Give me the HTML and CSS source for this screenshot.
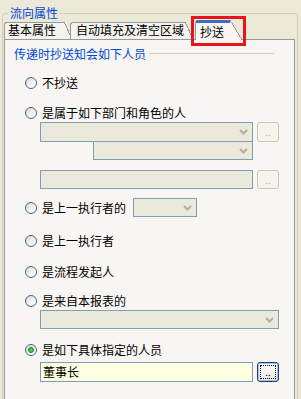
FILE: index.html
```html
<!DOCTYPE html>
<html lang="zh-cn">
<head>
    <meta charset="utf-8">
    <title>流向属性</title>
    <link rel="stylesheet" href="styles.css">
</head>
<body>
    <fieldset class="group">
        <legend class="group-title">流向属性</legend>

        <ul class="tabs">
            <li class="tab"><span>基本属性</span></li>
            <li class="tab tab-2"><span>自动填充及清空区域</span></li>
            <li class="tab tab-on"><span>抄送</span></li>
        </ul>

        <div class="panel">
            <div class="sub-title"><span>传递时抄送知会如下人员</span><i class="rule"></i></div>

            <label class="opt sp12"><input type="radio" name="cc" class="radio">不抄送</label>

            <label class="opt sp11"><input type="radio" name="cc" class="radio">是属于如下部门和角色的人</label>
            <div class="field tall">
                <div class="combo w-long"><svg width="9" height="6" viewBox="0 0 9 6"><polyline points="1,1 4.5,4.5 8,1" fill="none" stroke="#B0AEA1" stroke-width="2"/></svg></div>
                <div class="btn">..</div>
            </div>
            <div class="field up1">
                <div class="combo w-mid"><svg width="9" height="6" viewBox="0 0 9 6"><polyline points="1,1 4.5,4.5 8,1" fill="none" stroke="#B0AEA1" stroke-width="2"/></svg></div>
            </div>
            <div class="field sp10">
                <div class="text-box w-long"></div>
                <div class="btn">..</div>
            </div>

            <div class="opt sp9">
                <label class="opt-in"><input type="radio" name="cc" class="radio">是上一执行者的</label>
                <div class="combo w-short"><svg width="9" height="6" viewBox="0 0 9 6"><polyline points="1,1 4.5,4.5 8,1" fill="none" stroke="#B0AEA1" stroke-width="2"/></svg></div>
            </div>

            <label class="opt sp14"><input type="radio" name="cc" class="radio">是上一执行者</label>

            <label class="opt sp12"><input type="radio" name="cc" class="radio">是流程发起人</label>

            <label class="opt sp10"><input type="radio" name="cc" class="radio">是来自本报表的</label>
            <div class="field">
                <div class="combo w-full"><svg width="9" height="6" viewBox="0 0 9 6"><polyline points="1,1 4.5,4.5 8,1" fill="none" stroke="#B0AEA1" stroke-width="2"/></svg></div>
            </div>

            <label class="opt sp11"><input type="radio" name="cc" class="radio" checked>是如下具体指定的人员</label>
            <div class="field tall sp3">
                <div class="text-box on w-long">董事长</div>
                <div class="btn btn-on"><span>..</span></div>
            </div>
        </div>
    </fieldset>

    <div class="mark"></div>
</body>
</html>
```

FILE: styles.css
```css
body {
    margin: 0;
    position: relative;
    background: #ECE9D8;
    color: #000;
    font: 12px/14px "Noto Sans CJK SC", "Noto Sans", sans-serif;
}

/* 外框 流向属性 (下缘超出画面) */
fieldset.group {
    margin: 6px 3px 0 2px;
    padding: 0 2px 0 1px;
    border: 1px solid #D0D0BF;
    border-bottom: none;
    border-radius: 4px 4px 0 0;
    min-width: 0;
}
legend.group-title {
    margin-left: 4px;
    padding: 0 2px;
    color: #0046D5;
    line-height: 14px;
}

/* 分页标签 */
ul.tabs {
    list-style: none;
    margin: 0;
    padding: 0;
    height: 19px;
    display: flex;
    align-items: flex-end;
}
.tab {
    display: flex;
    height: 17px;
}
.tab span {
    border-top: 1px solid #919B9C;
    border-left: 1px solid #919B9C;
    border-top-left-radius: 3px;
    background: #F4F3EE;
    padding: 0 8px 2px 3px;
    line-height: 14px;
    white-space: nowrap;
}
.tab::after {
    content: "";
    width: 8px;
    background: linear-gradient(to top right, #F4F3EE calc(50% - 0.5px), #919B9C calc(50% - 0.5px), #919B9C calc(50% + 0.5px), transparent calc(50% + 0.5px));
}
.tab-2 {
    margin-left: -2px;
}
.tab-2 span {
    padding: 0 1px 2px 5px;
}
.tab-on {
    height: 20px;
    margin: 0 0 -1px 2px;
    position: relative;
    z-index: 1;
}
.tab-on span {
    border-top: 3px solid #3D6FB8;
    border-top-left-radius: 3px;
    background: #F7F6F3;
    padding: 2px 6px 1px 4px;
}
.tab-on::after {
    width: 12px;
    background: linear-gradient(to top right, #F7F6F3 calc(50% - 0.5px), #919B9C calc(50% - 0.5px), #919B9C calc(50% + 0.5px), transparent calc(50% + 0.5px));
}

/* 分页内容 */
.panel {
    border: 1px solid #919B9C;
    border-bottom: none;
    background: #F7F6F3;
    height: 359px;
    padding-left: 9px;
}
.sub-title {
    display: flex;
    align-items: center;
    height: 14px;
    margin-top: 7px;
    color: #0046D5;
    white-space: nowrap;
}
.sub-title .rule {
    flex: 1;
    height: 1px;
    margin: -1px 20px 0 3px;
    background: #D0D0BF;
}

.opt, .opt-in {
    display: flex;
    align-items: center;
    height: 19px;
    gap: 5px;
    white-space: nowrap;
}
.opt {
    margin-left: 11px;
}
.opt .opt-in {
    margin-right: 2px;
}
.radio {
    appearance: none;
    flex: none;
    margin: 0;
    width: 12px;
    height: 12px;
    border: 1px solid #3A6690;
    border-radius: 50%;
    background: linear-gradient(135deg, #D8D8D0, #FFFFFF 80%);
}
.radio:checked {
    background: radial-gradient(circle, #7EE07E 0, #2DAA2D 2px, #1E931E 2.6px, transparent 3.2px), linear-gradient(135deg, #D8D8D0, #FFFFFF 80%);
}

.field {
    display: flex;
    height: 19px;
    margin-left: 26px;
    gap: 4px;
}
.field.tall {
    height: 20px;
}
.up1 {
    margin-top: -1px;
    padding-left: 53px;
}
.sp3 { margin-top: 3px; }
.sp9 { margin-top: 9px; }
.sp10 { margin-top: 10px; }
.sp11 { margin-top: 11px; }
.sp12 { margin-top: 12px; }
.sp14 { margin-top: 14px; }

.combo, .text-box {
    box-sizing: border-box;
    height: 100%;
    border: 1px solid #7F9DB9;
    background: #EBE9DB;
}
.combo {
    display: flex;
    align-items: center;
    justify-content: flex-end;
    padding-right: 4px;
}
.w-long { width: 213px; }
.w-mid { width: 160px; }
.w-short { width: 64px; }
.w-full { width: 239px; }

.text-box.on {
    background: #FFFFE1;
    padding-left: 2px;
    line-height: 18px;
}

.btn {
    box-sizing: border-box;
    width: 22px;
    height: 100%;
    border: 1px solid #CBC8BB;
    border-radius: 3px;
    background: #F5F4EC;
    color: #B5B2A5;
    font-size: 10px;
    line-height: 17px;
    text-align: center;
}
.btn-on {
    display: flex;
    padding: 2px;
    border-color: #1C3F7A;
    background: linear-gradient(#FFFFFF, #E6E5DE);
    box-shadow: inset 0 0 0 1px #A9BEE8;
    color: #000;
    line-height: 12px;
}
.btn-on span {
    flex: 1;
    border: 1px dotted #000;
}

/* 红框标注 */
.mark {
    position: absolute;
    left: 191px;
    top: 16px;
    width: 55px;
    height: 30px;
    box-sizing: border-box;
    border: 3px solid #E8141B;
}
```
